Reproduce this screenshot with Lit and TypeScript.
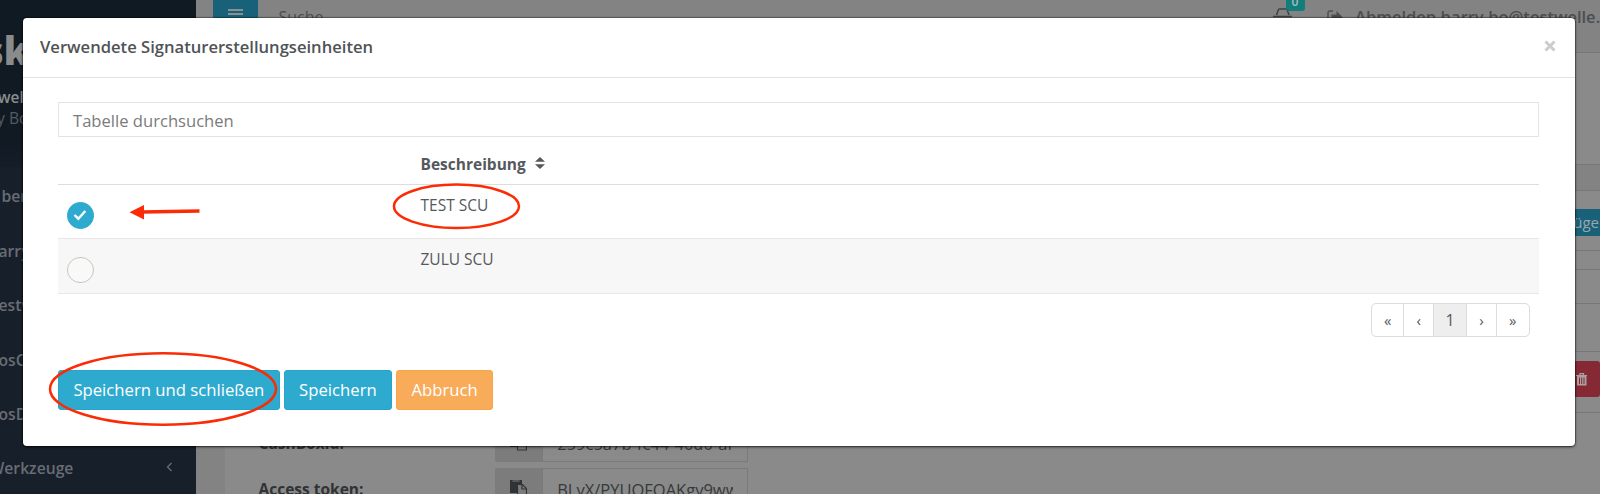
import { LitElement, html, css, svg } from "lit";
import { customElement, state } from "lit/decorators.js";

@customElement("app-backdrop")
class AppBackdrop extends LitElement {
  static styles = css`
    :host { display: flex; width: 1600px; height: 494px; overflow: hidden; color: #3f4244; }
    * { box-sizing: border-box; }
    .side { width: 195.5px; height: 494px; background: #171f2a; color: #686d74; font-weight: 600; font-size: 15.7px; white-space: nowrap; overflow: hidden; flex: none; }
    .profile { height: 167px; padding-top: 24px; background: linear-gradient(#101a22, #111a23 85%, #151d28); }
    .logo { font-size: 38px; line-height: 52px; font-weight: 800; color: #8b8b8b; margin-left: -16px; }
    .org { line-height: 21px; margin: 11px 0 0 -2px; color: #8a8d90; font-size: 15.4px; }
    .user { line-height: 21px; margin-left: -3px; color: #535a62; font-weight: 400; }
    .item { height: 54.5px; line-height: 58px; display: flex; justify-content: space-between; }
    .item svg { margin: 22px 22.500px 0 0; }
    .item .long { margin-left: -10.5px; line-height: 57px; }
    .main { flex: 1; background: #8a8a8a; display: flex; flex-direction: column; min-width: 0; }
    .top { height: 53px; background: #838383; border-bottom: 1px solid #787878; display: flex; flex: none; font-size: 16px; padding-left: 17.5px; white-space: nowrap; }
    .burger { width: 45px; height: 40px; background: #186178; padding: 9px 15px; display: flex; flex-direction: column; gap: 2.4px; }
    .burger i { height: 2px; background: #8a8f91; }
    .search { margin-left: 20.5px; line-height: 35px; flex: 1; color: #4d4d4d; }
    .cart { width: 32px; position: relative; margin-right: 22px; }
    .cart svg { margin-top: 8px; }
    .badge { position: absolute; left: 12.5px; top: -8px; width: 19px; height: 18.5px; background: #127e7c; border-radius: 3px; color: #a4bcbc; font: 600 12px/20px "Open Sans", sans-serif; text-align: center; }
    .exit { margin: 10px 12px 0 0; }
    .bye { line-height: 33px; font-weight: 600; color: #4b4e50; width: 245px; font-size: 16.5px; }
    .head { height: 138px; border-bottom: 1px solid #777; padding-top: 111px; flex: none; }
    .head div { height: 26px; background: #838383; border-top: 1px solid #777; }
    .row { border-bottom: 1px solid #777; flex: none; }
    .r1 { height: 59.5px; padding-top: 18px; display: flex; justify-content: flex-end; }
    .add { width: 92px; height: 27px; background: #186178; color: #9aa7ac; font-size: 15px; line-height: 26px; text-align: right; padding-right: 1px; }
    .r2 { height: 19px; } .r3 { height: 34px; } .r4 { height: 48px; }
    .r5 { height: 61.5px; padding-top: 9.5px; display: flex; justify-content: flex-end; }
    .del { width: 70px; height: 36px; background: #852a35; border-radius: 3px; padding: 8px 0 0 46px; }
    .form { margin: 9px 0 0 0; display: flex; flex-direction: column; gap: 6.5px; border-left: 29.5px solid #838383; padding-left: 34px; }
    .field { height: 39.5px; display: flex; align-items: stretch; width: 489px; flex: none; }
    .label { width: 236.7px; flex: none; font-weight: 700; font-size: 15.5px; line-height: 42px; color: #303335; }
    .addon { width: 47px; flex: none; background: #7c7c7c; border-radius: 2px 0 0 2px; padding: 11px 0 0 15px; }
    .value { flex: 1; min-width: 0; border: 1px solid #7a7a7a; font-size: 16.5px; line-height: 41px; padding: 0 14px; color: #36393b; }
    .value span { display: block; overflow: hidden; white-space: nowrap; }
  `;

  private paste() {
    return svg`<svg width="17" height="19" viewBox="0 0 17 19"><path d="M0 1h12v4H8.500v9H0z" fill="#303335"/><path d="M2.500 2h7" stroke="#7c7c7c"/><path d="M7.500 5.500h5l4 4v7.500h-9z" fill="#7c7c7c" stroke="#303335" stroke-width="1.200"/><path d="M12 5.500v4.500h4.500" fill="none" stroke="#303335" stroke-width="1.200"/></svg>`;
  }

  private field(label: string, value: string) {
    return html`<div class="field"><div class="label">${label}</div><div class="addon">${this.paste()}</div><div class="value"><span>${value}</span></div></div>`;
  }

  render() {
    return html`
      <div class="side">
        <div class="profile"><div class="logo">sk</div><div class="org">welle</div><div class="user">y Bo</div></div>
        ${["ber", "arry", "estw", "osC", "osD"].map((t, i) => html`<div class="item"><span style="margin-left:${i ? -1.5 : 1.5}px">${t}</span></div>`)}
        <div class="item"><span class="long">Werkzeuge</span>
          <svg width="7" height="10" viewBox="0 0 7 10"><path d="M5.500 1L1.500 5l4 4" fill="none" stroke="#686d74" stroke-width="1.300"/></svg></div>
      </div>
      <div class="main">
        <div class="top">
          <div class="burger"><i></i><i></i><i></i></div>
          <div class="search">Suche</div>
          <div class="cart"><svg width="20" height="20" viewBox="0 0 20 20"><path d="M3.500 7l2-5.500q.5-.5 1-.5h6.500q.5 0 1 .5l2 5.500M0 8.500h19" fill="none" stroke="#3f4244" stroke-width="1.500"/></svg><span class="badge">0</span></div>
          <svg class="exit" width="16" height="14" viewBox="0 0 16 14"><path d="M6 1H3Q1 1 1 3v8q0 2 2 2h3" fill="none" stroke="#4b4e50" stroke-width="1.400"/><path d="M4.500 4.500h5V1L15.500 7l-6 6V9h-5z" fill="#4b4e50"/></svg>
          <div class="bye">Abmelden harry.bo@testwelle.</div>
        </div>
        <div class="head"><div></div></div>
        <div class="row r1"><div class="add">Hinzufüge</div></div>
        <div class="row r2"></div><div class="row r3"></div><div class="row r4"></div>
        <div class="row r5"><div class="del"><svg width="12" height="13" viewBox="0 0 12 13"><path d="M0 2.500h11M4 2V.7h3.500V2" fill="none" stroke="#a8a0a1" stroke-width="1.200"/><path d="M1 3h9.500v9.500H1z" fill="#a8a0a1"/><path d="M3.500 4.500v6.500M5.700 4.500v6.500M8 4.500v6.500" stroke="#852a35"/></svg></div></div>
        <div class="form">${this.field("CashBoxId:", "259c5a7b-fc44-40d0-af")}${this.field("Access token:", "BLyX/PYUOFOAKgy9ww")}</div>
      </div>`;
  }
}

@customElement("app-root")
class AppRoot extends LitElement {
  static styles = css`
    :host { display: block; position: relative; width: 1600px; height: 494px; overflow: hidden; font-family: "Open Sans", sans-serif; color: #55595c; }
    * { box-sizing: border-box; }
    .modal { position: absolute; left: 22.5px; top: 17.5px; width: 1552.4px; height: 428px; background: #fff; border-radius: 4px; box-shadow: 0 1px 3px rgba(0,0,0,.6), 0 0 1px 1px rgba(0,0,0,.3); }
    .header { height: 60.5px; border-bottom: 1px solid #e2e2e2; padding: 0 19px 0 17.5px; display: flex; justify-content: space-between; font-size: 16.6px; font-weight: 600; line-height: 58px; color: #4f5356; }
    .close { margin-top: 22px; }
    .body { padding: 24px 35.5px 0; }
    .find { height: 35px; border: 1px solid #e3e3e3; padding-left: 14px; font-size: 16.6px; line-height: 36px; color: #7b7b7b; }
    .th { height: 47.500px; padding-left: 362.5px; border-bottom: 1.500px solid #ddd; font-size: 15.5px; font-weight: 700; line-height: 54px; display: flex; gap: 9px; }
    .th svg { margin-top: 20px; }
    .tr { height: 54.5px; border-bottom: 1px solid #e8e8e8; display: flex; font-size: 15.5px; }
    .tr.odd { background: #f7f7f7; }
    .tr div { width: 362.5px; padding: 17.5px 0 0 9px; }
    .tr span { line-height: 41.500px; }
    .radio { width: 26.500px; height: 26.500px; border: 1px solid #c9c6bd; border-radius: 50%; display: flex; align-items: center; justify-content: center; background: #f9f9f9; }
    .radio.on { background: #2eaacf; border-color: #2eaacf; }
    .pager { display: flex; margin: 9.5px 9.5px 0 auto; width: 159px; height: 33.5px; border: 1px solid #dcdcdc; border-radius: 5px; font-size: 15px; line-height: 32.500px; text-align: center; }
    .pager span { width: 29.700px; border-left: 1px solid #dcdcdc; }
    .pager span:first-child { border: 0; width: 31.500px; }
    .pager .cur { width: 33px; background: #eee; font-size: 16px; }
    .pager span:last-child { flex: 1; }
    .actions { display: flex; gap: 4px; margin-top: 33px; }
    .btn { height: 40.500px; border: 1px solid #26a5cc; border-radius: 3px; background: #2eaacf; color: #fff; font-size: 16.7px; line-height: 38px; text-align: center; white-space: nowrap; padding: 0 14.4px; }
    .warn { background: #f8ab59; border-color: #faa448; }
    .marks { position: absolute; left: 0; top: 0; }
  `;

  @state() private selected = 0;

  render() {
    return html`
      <app-backdrop></app-backdrop>
      <div class="modal">
        <div class="header"><span class="title">Verwendete Signaturerstellungseinheiten</span>
          <svg class="close" width="12" height="12" viewBox="0 0 12 12"><path d="M1.500 1.500l9 9M10.500 1.500l-9 9" stroke="#ccc" stroke-width="3"/></svg></div>
        <div class="body">
          <div class="find">Tabelle durchsuchen</div>
          <div class="th">Beschreibung<svg width="10" height="12" viewBox="0 0 10 12"><path d="M0 4.800L5 0l5 4.800zM0 7.200L5 12l5-4.800z" fill="#55595c"/></svg></div>
          ${["TEST SCU", "ZULU SCU"].map((t, i) => html`
            <div class="tr ${i % 2 ? "odd" : ""}" @click=${() => (this.selected = i)}>
              <div><i class="radio ${this.selected === i ? "on" : ""}">${this.selected === i ? svg`<svg width="14" height="12" viewBox="0 0 14 12"><path d="M1.500 6L5.300 9.700 12.300 2" fill="none" stroke="#fff" stroke-width="2.400"/></svg>` : ""}</i></div>
              <span>${t}</span>
            </div>`)}
          <div class="pager"><span>«</span><span>‹</span><span class="cur">1</span><span>›</span><span>»</span></div>
          <div class="actions">
            <div class="btn">Speichern und schließen</div>
            <div class="btn">Speichern</div>
            <div class="btn warn">Abbruch</div>
          </div>
        </div>
      </div>
      <svg class="marks" width="1600" height="494" fill="none" stroke="#fb2b06" stroke-width="2.500">
        <ellipse cx="456.500" cy="206.300" rx="62.500" ry="21.700"/>
        <ellipse cx="163" cy="389" rx="113" ry="35.700"/>
        <path d="M199.500 211L142 212" stroke-width="3.300"/>
        <path d="M129.500 212.300L144 205v14.500z" fill="#fb2b06" stroke="none"/>
      </svg>`;
  }
}
